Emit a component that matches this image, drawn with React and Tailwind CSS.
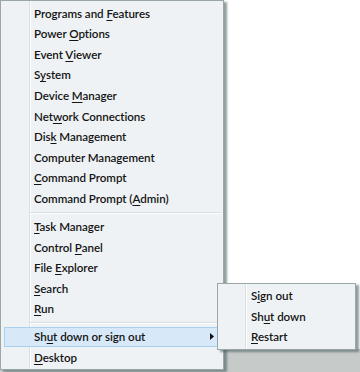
import React from "react";

const mainGroups = [
  [
    "Programs and &Features",
    "Power &Options",
    "Event &Viewer",
    "S&ystem",
    "Device &Manager",
    "Net&work Connections",
    "Dis&k Management",
    "Computer Management",
    "&Command Prompt",
    "Command Prompt (&Admin)",
  ],
  ["&Task Manager", "Control &Panel", "File &Explorer", "&Search", "&Run"],
  ["Sh&ut down or sign out", "&Desktop"],
];

const subItems = ["S&ign out", "Sh&ut down", "&Restart"];

// "&" marks the access key letter, like a Windows menu resource
function Label({ text }) {
  const i = text.indexOf("&");
  if (i < 0) return <span>{text}</span>;
  return (
    <span>
      {text.slice(0, i)}
      <span className="underline underline-offset-[2px] decoration-1">{text[i + 1]}</span>
      {text.slice(i + 2)}
    </span>
  );
}

function Separator() {
  return (
    <div className="h-[7.4px] flex flex-col justify-center pl-[29px] pr-[2px]">
      <div className="h-px bg-[#d9dde0]" />
      <div className="h-px bg-white" />
    </div>
  );
}

function Row({ text }) {
  return (
    <div className="h-[20.6px] flex items-center pl-[33px]">
      <Label text={text} />
    </div>
  );
}

function ActiveRow({ text }) {
  return (
    <div className="h-[20.6px] mx-[3px] flex items-center justify-between pl-[29px] pr-[5px] bg-[#d7e9f9] border border-[#a9d0ef]">
      <Label text={text} />
      <svg width="4" height="7" viewBox="0 0 4 7">
        <path d="M0 0 L4 3.5 L0 7 Z" fill="#111" />
      </svg>
    </div>
  );
}

export default function App() {
  return (
    <div
      className="relative w-[360px] h-[372px] overflow-hidden bg-[linear-gradient(to_bottom,#ffffff_349px,#c6cac9_349px)] text-[11.6px] tracking-[-0.05px] text-[#141414] font-semibold"
      style={{ fontFamily: 'Lato, "Liberation Sans", sans-serif' }}
    >
      {/* Main menu */}
      <div className="w-[224px] border border-[#9aa6a8] pt-[2px] pb-[1px] shadow-[3px_2px_2px_rgba(70,95,95,0.6)] bg-[linear-gradient(to_right,#eef2f4_28px,#dadfe2_28px,#dadfe2_29px,#fcfdfd_29px,#fcfdfd_30px,#eef2f4_30px)]">
        {mainGroups[0].map((t) => (
          <Row key={t} text={t} />
        ))}
        <Separator />
        {mainGroups[1].map((t) => (
          <Row key={t} text={t} />
        ))}
        <Separator />
        <ActiveRow text={mainGroups[2][0]} />
        <Row text={mainGroups[2][1]} />
      </div>

      {/* Flyout submenu */}
      <div className="absolute left-[217px] top-[283px] w-[139px] border border-[#9aa6a8] py-[2px] shadow-[3px_2px_2px_rgba(70,95,95,0.6)] bg-[linear-gradient(to_right,#eef2f4_27px,#dadfe2_27px,#dadfe2_28px,#fcfdfd_28px,#fcfdfd_29px,#eef2f4_29px)]">
        {subItems.map((t) => (
          <div key={t} className="h-[20.3px] flex items-center pl-[33px]">
            <Label text={t} />
          </div>
        ))}
      </div>
    </div>
  );
}
